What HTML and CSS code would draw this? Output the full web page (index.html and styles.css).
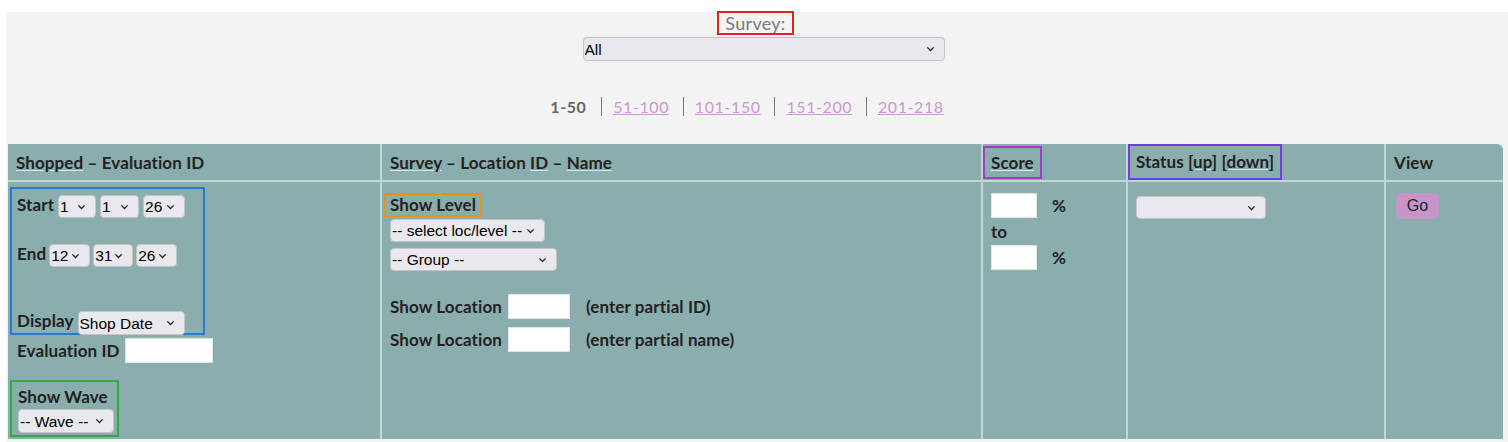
FILE: index.html
```html
<!DOCTYPE html>
<html lang="en">
<head>
    <meta charset="UTF-8">
    <title>Evaluations</title>
    <link rel="stylesheet" href="styles.css">
</head>
<body>
    <div class="page">
        <div class="survey-filter">
            <span class="survey-label">Survey:</span>
            <select class="survey-select"><option>All</option></select>
        </div>

        <div class="pager">
            <span class="current">1-50</span>
            <a href="#">51-100</a>
            <a href="#">101-150</a>
            <a href="#">151-200</a>
            <a href="#">201-218</a>
        </div>

        <table class="results">
            <colgroup>
                <col class="c1"><col class="c2"><col class="c3"><col class="c4"><col class="c5">
            </colgroup>
            <thead>
                <tr>
                    <th><u>Shopped</u> – Evaluation ID</th>
                    <th><u>Survey</u> – Location <u>ID</u> – <u>Name</u></th>
                    <th class="score-head"><span class="score-box"><u>Score</u></span></th>
                    <th class="status-head"><span class="status-box">Status <u>[up]</u> <u>[down]</u></span></th>
                    <th>View</th>
                </tr>
            </thead>
            <tbody>
                <tr>
                    <td class="col-dates">
                        <div class="date-box">
                            <div class="date-row">
                                <label>Start</label>
                                <select class="s-m"><option>1</option></select>
                                <select class="s-d"><option>1</option></select>
                                <select class="s-y"><option>26</option></select>
                            </div>
                            <div class="date-row end-row">
                                <label>End</label>
                                <select class="s-m2"><option>12</option></select>
                                <select class="s-d2"><option>31</option></select>
                                <select class="s-y2"><option>26</option></select>
                            </div>
                            <div class="date-row display-row">
                                <label>Display</label>
                                <select class="s-display"><option>Shop Date</option></select>
                            </div>
                        </div>
                        <div class="eval-row">
                            <label>Evaluation ID</label>
                            <input type="text" class="in-eval">
                        </div>
                        <div class="wave-box">
                            <label>Show Wave</label>
                            <select class="s-wave"><option>-- Wave --</option></select>
                        </div>
                    </td>
                    <td class="col-loc">
                        <span class="level-label">Show Level</span>
                        <select class="s-level"><option>-- select loc/level --</option></select>
                        <select class="s-group"><option>-- Group --</option></select>
                        <div class="loc-row first">
                            <label>Show Location</label>
                            <input type="text" class="in-loc">
                            <span>(enter partial ID)</span>
                        </div>
                        <div class="loc-row">
                            <label>Show Location</label>
                            <input type="text" class="in-loc">
                            <span>(enter partial name)</span>
                        </div>
                    </td>
                    <td class="col-score">
                        <div class="pct-row"><input type="text" class="in-pct"><span>%</span></div>
                        <div class="to">to</div>
                        <div class="pct-row"><input type="text" class="in-pct"><span>%</span></div>
                    </td>
                    <td class="col-status">
                        <select class="s-status"><option></option></select>
                    </td>
                    <td class="col-view">
                        <button class="go-btn">Go</button>
                    </td>
                </tr>
            </tbody>
        </table>
    </div>
</body>
</html>
```

FILE: styles.css
```css
body {
    margin: 0;
    background: #ffffff;
    font-family: 'Lato', 'Open Sans', sans-serif;
    color: #222;
}
.page {
    margin: 12px 0 0 6px;
    background: #f3f3f3;
    padding: 0 5px 2px 2px;
    height: 430px;
    box-sizing: border-box;
}
.survey-filter {
    display: flex;
    flex-direction: column;
    align-items: center;
}
.survey-label {
    margin-top: -1px;
    border: 2px solid #e02424;
    padding: 0 6px;
    font-size: 18px;
    letter-spacing: 0.3px;
    color: #7a7a7a;
    line-height: 20px;
}
select {
    -webkit-appearance: none;
    appearance: none;
    font-family: 'Liberation Sans', Arial, sans-serif;
    font-size: 15.5px;
    color: #000;
    background-color: #e9e9ed;
    background-image: url("data:image/svg+xml;utf8,<svg xmlns='http://www.w3.org/2000/svg' width='10' height='6' viewBox='0 0 10 6'><path d='M1.5 1.2 5 4.6 8.5 1.2' fill='none' stroke='%23222' stroke-width='1.5'/></svg>");
    background-repeat: no-repeat;
    background-position: right 9px center;
    background-size: 9px 6px;
    border: 1px solid #c3c3c9;
    border-radius: 4px;
    height: 23px;
    padding: 0 18px 0 1px;
}
.survey-select {
    margin: 2px 0 0 16px;
    width: 362px;
    height: 24px;
}
.pager {
    margin-top: 35px;
    text-align: center;
    font-size: 16px;
    letter-spacing: 0.6px;
    line-height: 22px;
    padding-right: 8px;
}
.pager .current {
    color: #666;
    font-weight: bold;
    padding-right: 10px;
}
.pager a {
    color: #c89ad0;
    border-left: 1px solid #777;
    padding: 0 9px 0 11px;
}
.results {
    margin-top: 26px;
    width: 1495px;
    table-layout: fixed;
    border-collapse: collapse;
    background: #8aadad;
    border-top-right-radius: 6px;
    font-size: 17px;
    letter-spacing: 0.1px;
}
.c1 { width: 373px; }
.c2 { width: 601px; }
.c3 { width: 145px; }
.c4 { width: 258px; }
.c5 { width: 118px; }
th {
    text-align: left;
    font-weight: bold;
    height: 36px;
    padding: 0 8px;
    border: 2px solid #c3d6d6;
    border-top: none;
}
th:first-child, td:first-child { border-left: none; }
th:last-child, td:last-child { border-right: none; }
th u, .status-box u {
    text-decoration-color: #d8e4e4;
}
.score-head { padding: 0; }
.score-box {
    display: inline-block;
    border: 2px solid #a63cc6;
    padding: 5px 6px;
    line-height: 19px;
}
.status-head { padding: 0; }
.status-box {
    display: inline-block;
    border: 2px solid #6a40e4;
    padding: 0 6px;
    line-height: 32px;
}
td {
    vertical-align: top;
    height: 258px;
    border: 2px solid #c3d6d6;
    border-bottom: none;
    box-sizing: border-box;
    padding: 0;
}
label {
    font-weight: bold;
}
input[type="text"] {
    border: 1px solid #e4e4e4;
    background: #fff;
    height: 25px;
    box-sizing: border-box;
    padding: 0 4px;
}
.col-dates {
    padding: 5px 0 0 2px;
}
.date-box {
    width: 195px;
    box-sizing: border-box;
    border: 2px solid #2a78d0;
    padding: 6px 0 0 5px;
    height: 148px;
}
.date-row {
    display: flex;
    align-items: flex-start;
    gap: 4px;
}
.date-row label { line-height: 20px; margin-right: 0; }
.end-row { margin-top: 26px; gap: 3px; }
.display-row { margin-top: 44px; }
.s-m { width: 38px; }
.s-d { width: 39px; }
.s-y { width: 42px; }
.s-m2 { width: 41px; }
.s-d2 { width: 40px; }
.s-y2 { width: 41px; }
.s-display { width: 107px; height: 24px; }
.eval-row {
    display: flex;
    gap: 5px;
    align-items: center;
    padding: 3px 0 0 7px;
}
.in-eval { width: 88px; }
.wave-box {
    margin-top: 17px;
    width: 109px;
    height: 57px;
    box-sizing: border-box;
    border: 2px solid #34a844;
    padding: 5px 0 0 6px;
}
.wave-box label { display: block; line-height: 19px; }
.s-wave { width: 96px; margin: 3px 0 0 0; height: 24px; }
.col-loc {
    padding: 11px 8px 0 8px;
}
.level-label {
    display: inline-block;
    border: 2px solid #e8921c;
    padding: 0 4px;
    margin-left: -6px;
    font-weight: bold;
    line-height: 20px;
}
.s-level { display: block; width: 155px; margin-top: 2px; }
.s-group { display: block; width: 167px; margin-top: 6px; }
.loc-row {
    display: flex;
    align-items: center;
    margin-top: 8px;
}
.loc-row.first { margin-top: 23px; }
.loc-row label { width: 118px; }
.loc-row span { font-weight: bold; margin-left: 16px; }
.in-loc { width: 62px; }
.col-score {
    padding: 11px 8px 0 8px;
}
.pct-row {
    display: flex;
    align-items: center;
}
.in-pct { width: 46px; height: 26px; }
.pct-row span { font-weight: bold; margin-left: 15px; }
.to { font-weight: bold; margin: 3px 0 2px 0; line-height: 22px; }
.col-status {
    padding: 14px 8px 0 8px;
}
.s-status { width: 130px; }
.col-view {
    padding: 11px 8px 0 10px;
}
.go-btn {
    background: #c894c8;
    border: none;
    border-radius: 6px;
    font-family: 'Liberation Sans', Arial, sans-serif;
    font-size: 16px;
    color: #222;
    width: 43px;
    height: 26px;
    padding: 0;
}
```
